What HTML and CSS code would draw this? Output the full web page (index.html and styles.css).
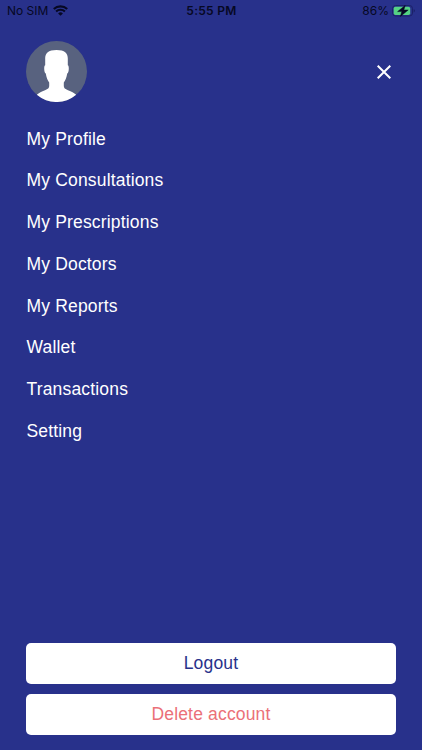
FILE: index.html
```
<!DOCTYPE html>
<html lang="en">
<head>
<meta charset="UTF-8">
<meta name="viewport" content="width=device-width, initial-scale=1.0">
<title>Menu</title>
<link rel="stylesheet" href="styles.css">
</head>
<body>

<div class="screen">

 <div class="status-bar">
  <div class="carrier">
   <span>No SIM</span>
   <svg class="wifi" viewBox="0 0 15 11" width="15" height="11">
    <path d="M.8 4.1a9.6 9.6 0 0 1 13.4 0M3.1 6.6a6.3 6.3 0 0 1 8.8 0" fill="none" stroke="#060823" stroke-width="2.1"/>
    <path d="M5.1 8.4a3.5 3.5 0 0 1 4.8 0L7.5 10.8z" fill="#060823"/>
   </svg>
  </div>
  <div class="time">5:55 PM</div>
  <div class="battery">
   <span>86%</span>
   <svg viewBox="0 0 24 12" width="24" height="12">
    <rect x=".5" y=".5" width="20" height="10.5" rx="3" fill="none" stroke="#1b2168"/>
    <rect x="1.7" y="1.7" width="16.5" height="8.2" rx="1.7" fill="#55d284"/>
    <path d="M21.7 4v3.6q1.2-.5 1.2-1.8t-1.2-1.8z" fill="#1b2168"/>
    <path d="M13.2 .4L5.6 6.6h4.2L8.4 11.4 16.2 5h-4.4z" fill="#060823" stroke="#060823" stroke-width=".5"/>
   </svg>
  </div>
 </div>

 <div class="header">
  <svg class="avatar" viewBox="0 0 61 61" width="61" height="61">
   <circle cx="30.5" cy="30.5" r="30.5" fill="#58627f"/>
   <path d="M30.5 9C22 9 19 12.5 19.2 18L19.2 24.3C17.6 24.6 18 31.8 19.8 32.5C20.4 36.5 21.6 39.5 23.2 41.5V45C23.2 47 22 48 19 49.2C15.5 50.6 13 51.8 10.8 53.8A30.5 30.5 0 0 0 50.2 53.8C48 51.8 45.5 50.6 42 49.2C39 48 37.8 47 37.8 45V41.5C39.4 39.5 40.6 36.5 41.2 32.5C43 31.8 43.4 24.6 41.8 24.3L41.8 18C42 12.5 39 9 30.5 9z" fill="#fff"/>
  </svg>
  <button class="close-button" aria-label="Close">
   <svg viewBox="0 0 14 14" width="14" height="14">
    <path d="M.7.7l12.6 12.6M13.3.7L.7 13.3" stroke="#fff" stroke-width="2"/>
   </svg>
  </button>
 </div>

 <nav class="menu">
  <a class="menu-item">My Profile</a>
  <a class="menu-item">My Consultations</a>
  <a class="menu-item">My Prescriptions</a>
  <a class="menu-item">My Doctors</a>
  <a class="menu-item">My Reports</a>
  <a class="menu-item">Wallet</a>
  <a class="menu-item">Transactions</a>
  <a class="menu-item">Setting</a>
 </nav>

 <div class="actions">
  <button class="button">Logout</button>
  <button class="button delete-button">Delete account</button>
 </div>

</div>

</body>
</html>
```
FILE: styles.css
```
body, html {
 height: 100%;
 margin: 0;
 overflow: hidden;
 background-color: #28318b;
 font-family: "Liberation Sans", Arial, sans-serif;
}
.screen {
 height: 100%;
 display: flex;
 flex-direction: column;
 box-sizing: border-box;
 padding-bottom: 15px;
}
.status-bar {
 display: grid;
 grid-template-columns: 1fr auto 1fr;
 align-items: center;
 height: 21px;
 padding: 0 6px 0 7px;
 font-family: Inter, sans-serif;
 font-size: 12px;
 color: #060823;
}
.carrier {
 display: flex;
 align-items: center;
 gap: 5px;
}
.time {
 font-weight: 600;
 letter-spacing: 0.3px;
}
.battery {
 display: flex;
 align-items: center;
 justify-content: flex-end;
 gap: 3px;
}
.header {
 display: flex;
 justify-content: space-between;
 align-items: center;
 height: 61px;
 margin: 20px 31.5px 0 26px;
}
.close-button {
 display: flex;
 padding: 0;
 border: none;
 background: none;
 cursor: pointer;
}
.menu {
 display: flex;
 flex-direction: column;
 margin: 15.5px 26.5px 0;
}
.menu-item {
 height: 41.8px;
 line-height: 42px;
 font-size: 17.5px;
 letter-spacing: 0.17px;
 color: #fff;
}
.actions {
 display: flex;
 flex-direction: column;
 gap: 10px;
 margin: auto 26px 0;
}
.button {
 height: 41px;
 padding: 0;
 border: none;
 border-radius: 5px;
 background-color: #fff;
 color: #28318b;
 font-family: inherit;
 font-size: 17.5px;
 letter-spacing: 0.17px;
 cursor: pointer;
}
.delete-button {
 color: #eb7078;
}
```
